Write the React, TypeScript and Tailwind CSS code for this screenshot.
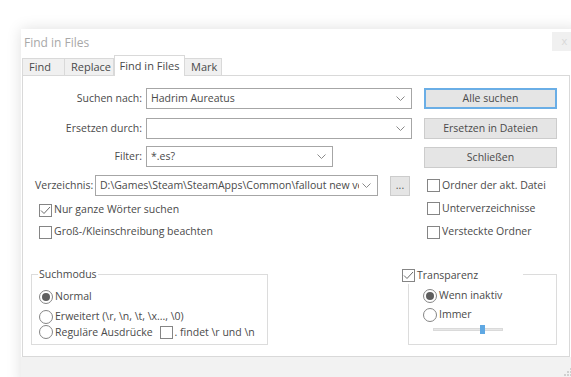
import React from 'react';

const font = { fontFamily: '"Open Sans", "Noto Sans", sans-serif' };

function Chevron() {
  return (
    <svg width="9" height="5" viewBox="0 0 9 5" className="shrink-0">
      <polyline points="0.5,0.5 4.5,4.5 8.5,0.5" fill="none" stroke="#8a8a8a" strokeWidth="1" />
    </svg>
  );
}

function Combo({ width, value }: { width: string; value?: string }) {
  return (
    <div className={`${width} h-[21px] border border-[#a6a6a6] bg-white flex items-center pl-[4px] pr-[6px] gap-[3px]`}>
      <span className="flex-1 overflow-hidden whitespace-nowrap">{value}</span>
      <Chevron />
    </div>
  );
}

function CheckBox({ checked, label }: { checked?: boolean; label?: string }) {
  return (
    <div className="flex items-center gap-[2px]">
      <div className="w-[13px] h-[13px] border border-[#858585] bg-white flex items-center justify-center shrink-0">
        {checked && (
          <svg width="11" height="9" viewBox="0 0 11 9">
            <polyline points="1,4.5 4,7.5 10,1" fill="none" stroke="#6b6b6b" strokeWidth="1" />
          </svg>
        )}
      </div>
      {label && <span className="whitespace-nowrap">{label}</span>}
    </div>
  );
}

function Radio({ checked, label }: { checked?: boolean; label: string }) {
  return (
    <div className="flex items-center gap-[2px]">
      <div className="w-[14px] h-[14px] rounded-full border border-[#858585] bg-white flex items-center justify-center shrink-0">
        {checked && <div className="w-[8px] h-[8px] rounded-full bg-[#5e5e5e]" />}
      </div>
      <span className="whitespace-nowrap">{label}</span>
    </div>
  );
}

function Button({ label, focused }: { label: string; focused?: boolean }) {
  return (
    <div
      className={`w-[133px] h-[21px] bg-[#e5e5e5] flex items-center justify-center ${
        focused ? 'border-2 border-[#6aaee6]' : 'border border-[#cccccc]'
      }`}
    >
      {label}
    </div>
  );
}

export default function App() {
  const tabs = [
    { label: 'Find', width: 'w-[43px]' },
    { label: 'Replace', width: 'w-[49px]' },
    { label: 'Find in Files', width: 'w-[71px]', active: true },
    { label: 'Mark', width: 'w-[37px]' }
  ];

  return (
    <div className="w-[571px] h-[377px] bg-white overflow-hidden pt-[29px] pl-[21px] text-[10.5px] text-[#4a4a4a]" style={font}>
      <div className="w-[560px] h-[360px] bg-white shadow-[0_0_14px_rgba(0,0,0,0.13)] flex flex-col">
        {/* Title bar */}
        <div className="h-[26px] flex items-start justify-between">
          <span className="pl-[3px] pt-[5px] text-[12px] text-[#a8a8a8]">Find in Files</span>
          <div className="w-[25px] h-[19px] mt-[3px] mr-[4px] bg-[#f0f0f0] flex items-center justify-center text-[11px] text-[#d8d8d8]">
            x
          </div>
        </div>

        {/* Tabs */}
        <div className="h-[20px] flex items-end pl-[1px] relative z-10">
          {tabs.map((tab, i) =>
            tab.active ? (
              <div
                key={i}
                className={`${tab.width} h-[21px] -mb-px bg-white border border-b-0 border-[#d9d9d9] flex items-start justify-center pt-[2px] text-[11px]`}
              >
                {tab.label}
              </div>
            ) : (
              <div
                key={i}
                className={`${tab.width} h-[17px] bg-[#f0f0f0] border-t border-r border-[#d9d9d9] ${i === 0 ? 'border-l' : ''} flex items-center pl-[6px] text-[11px]`}
              >
                {tab.label}
              </div>
            )
          )}
        </div>

        {/* Panel */}
        <div className="w-[548px] h-[282px] ml-px border border-[#d9d9d9] bg-white flex flex-col">
          {/* Suchen nach */}
          <div className="flex mt-[12px] h-[21px]">
            <div className="w-[401px] flex items-center">
              <span className="w-[119px] text-right">Suchen nach:</span>
              <div className="ml-[4px]">
                <Combo width="w-[266px]" value="Hadrim Aureatus" />
              </div>
            </div>
            <Button label="Alle suchen" focused />
          </div>

          {/* Ersetzen durch */}
          <div className="flex mt-[9px] h-[21px]">
            <div className="w-[401px] flex items-center">
              <span className="w-[119px] text-right">Ersetzen durch:</span>
              <div className="ml-[4px]">
                <Combo width="w-[266px]" />
              </div>
            </div>
            <Button label="Ersetzen in Dateien" />
          </div>

          {/* Filter */}
          <div className="flex mt-[7px] h-[22px]">
            <div className="w-[401px] flex items-start">
              <span className="w-[119px] text-right leading-[21px]">Filter:</span>
              <div className="ml-[4px]">
                <Combo width="w-[187px]" value="*.es?" />
              </div>
            </div>
            <div className="mt-[1px]">
              <Button label="Schließen" />
            </div>
          </div>

          {/* Verzeichnis */}
          <div className="flex mt-[7px] h-[21px]">
            <div className="w-[401px] flex items-center pl-[12px]">
              <span className="w-[60px]">Verzeichnis:</span>
              <Combo width="w-[283px]" value="D:\Games\Steam\SteamApps\Common\fallout new veg" />
              <div className="ml-[12px] w-[20px] h-[20px] bg-[#e5e5e5] border border-[#cccccc] flex items-center justify-center text-[#555]">
                ...
              </div>
            </div>
            <div className="flex items-center pl-[3px]">
              <CheckBox label="Ordner der akt. Datei" />
            </div>
          </div>

          {/* Checkbox rows */}
          <div className="flex mt-[6px] h-[16px]">
            <div className="w-[401px] flex items-center pl-[16px]">
              <CheckBox checked label="Nur ganze Wörter suchen" />
            </div>
            <div className="flex items-center pl-[3px] -mt-[3px]">
              <CheckBox label="Unterverzeichnisse" />
            </div>
          </div>
          <div className="flex mt-[6px] h-[16px]">
            <div className="w-[401px] flex items-center pl-[16px]">
              <CheckBox label="Groß-/Kleinschreibung beachten" />
            </div>
            <div className="flex items-center pl-[3px]">
              <CheckBox label="Versteckte Ordner" />
            </div>
          </div>

          {/* Group boxes */}
          <div className="flex mt-[34px]">
            <div className="ml-[8px] w-[237px] h-[71px] border border-[#dcdcdc] relative flex flex-col pl-[7px] pt-[14px] gap-[5px]">
              <span className="absolute -top-[8px] left-[6px] bg-white px-px">Suchmodus</span>
              <Radio checked label="Normal" />
              <div className="-mt-[1px]">
                <Radio label="Erweitert (\r, \n, \t, \x..., \0)" />
              </div>
              <div className="flex items-center -mt-[5px]">
                <Radio label="Reguläre Ausdrücke" />
                <div className="ml-[7px]">
                  <CheckBox label=". findet \r und \n" />
                </div>
              </div>
            </div>

            <div className="ml-[140px] w-[149px] h-[71px] border border-[#dcdcdc] relative flex flex-col pl-[14px] pt-[13px] gap-[3px]">
              <div className="absolute -top-[7px] -left-[7px] w-[121px] bg-white">
                <CheckBox checked label="Transparenz" />
              </div>
              <Radio checked label="Wenn inaktiv" />
              <Radio label="Immer" />
              <div className="ml-[10px] mt-[2px] w-[70px] h-[3px] bg-[#e7e7e7] border border-[#dadada] relative">
                <div className="absolute left-[46px] -top-[4px] w-[5px] h-[9px] bg-[#5fa8e3]" />
              </div>
            </div>
          </div>
        </div>

        {/* Bottom strip */}
        <div className="flex-1 bg-[#f2f2f2] relative">
          <svg width="10" height="10" viewBox="0 0 10 10" className="absolute left-[542px] top-[11px]">
            <rect x="7" y="0" width="2" height="2" fill="#d0d0d0" />
            <rect x="4" y="3" width="2" height="2" fill="#d0d0d0" />
            <rect x="7" y="3" width="2" height="2" fill="#d0d0d0" />
            <rect x="1" y="6" width="2" height="2" fill="#d0d0d0" />
            <rect x="4" y="6" width="2" height="2" fill="#d0d0d0" />
            <rect x="7" y="6" width="2" height="2" fill="#d0d0d0" />
          </svg>
        </div>
      </div>
    </div>
  );
}
